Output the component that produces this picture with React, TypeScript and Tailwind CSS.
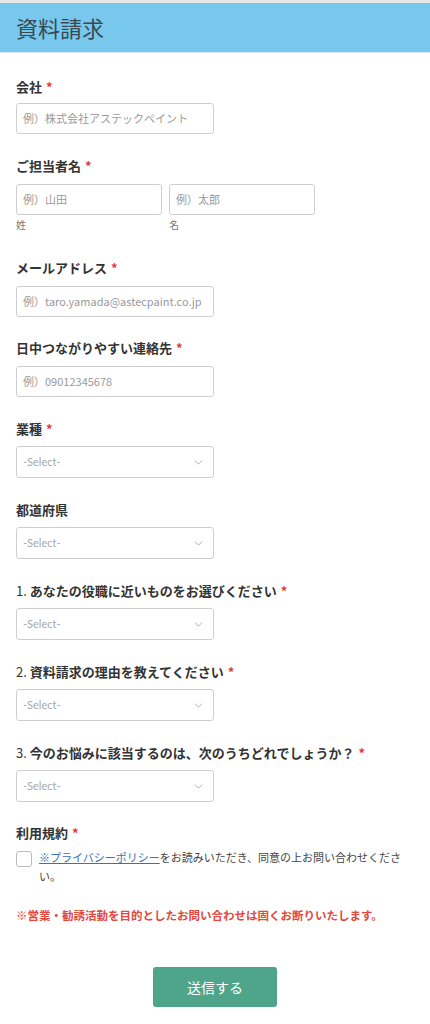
import { ChevronDown } from 'lucide-react'

const font = { fontFamily: '"Noto Sans CJK JP", "Noto Sans", sans-serif' }

function Label({ text, num, required }: { text: string; num?: string; required?: boolean }) {
    return (
        <div className="h-5 text-[13px] leading-5 font-bold text-[#333] whitespace-nowrap">
            {num && <span className="font-normal">{num} </span>}
            {text}
            {required && <span className="ml-1 text-[#e03b3b]">*</span>}
        </div>
    )
}

function TextInput({ placeholder, width = 'w-[198px]' }: { placeholder: string; width?: string }) {
    return (
        <div className={`${width} h-[31px] border border-[#cfcfcf] rounded-[3px] bg-white flex items-center px-[6px] text-[11px] text-[#9a9a9a] whitespace-nowrap overflow-hidden`}>
            {placeholder}
        </div>
    )
}

function SelectBox() {
    return (
        <div className="w-[198px] h-[32px] border border-[#cfcfcf] rounded-[3px] bg-white flex items-center justify-between pl-[6px] pr-[8px] text-[11px] text-[#a8a8a8]">
            <span style={{ fontFamily: 'Lato, "Noto Sans", sans-serif' }}>-Select-</span>
            <ChevronDown className="w-[13px] h-[13px] text-[#9a9a9a]" strokeWidth={1.5} />
        </div>
    )
}

export default function App() {
    const selects = [
        { num: '', label: '業種', required: true },
        { num: '', label: '都道府県', required: false },
        { num: '1.', label: 'あなたの役職に近いものをお選びください', required: true },
        { num: '2.', label: '資料請求の理由を教えてください', required: true },
        { num: '3.', label: '今のお悩みに該当するのは、次のうちどれでしょうか？', required: true },
    ]

    return (
        <div className="w-[430px] min-h-screen bg-white" style={font}>
            {/* Header */}
            <div className="border-t-[3px] border-[#e4e8ea] border-b border-b-[#d8e6ee]">
                <div className="h-[49px] bg-[#78c8ee] flex items-center px-4">
                    <h1 className="text-[22px] text-[#3a4853]">資料請求</h1>
                </div>
            </div>

            <div className="px-4 pt-[24px]">
                {/* 会社 */}
                <Label text="会社" required />
                <div className="mt-[6px]">
                    <TextInput placeholder="例）株式会社アステックペイント" />
                </div>

                {/* ご担当者名 */}
                <div className="mt-[22px]">
                    <Label text="ご担当者名" required />
                    <div className="mt-[8px] flex gap-[7px]">
                        <div>
                            <TextInput placeholder="例）山田" width="w-[146px]" />
                            <div className="mt-[2px] text-[10px] text-[#777]">姓</div>
                        </div>
                        <div>
                            <TextInput placeholder="例）太郎" width="w-[146px]" />
                            <div className="mt-[2px] text-[10px] text-[#777]">名</div>
                        </div>
                    </div>
                </div>

                {/* メールアドレス */}
                <div className="mt-[26px]">
                    <Label text="メールアドレス" required />
                    <div className="mt-[8px]">
                        <TextInput placeholder="例）taro.yamada@astecpaint.co.jp" />
                    </div>
                </div>

                {/* 連絡先 */}
                <div className="mt-[21px]">
                    <Label text="日中つながりやすい連絡先" required />
                    <div className="mt-[8px]">
                        <TextInput placeholder="例）09012345678" />
                    </div>
                </div>

                {/* Selects */}
                {selects.map(s => (
                    <div key={s.label} className="mt-[22px]">
                        <Label num={s.num} text={s.label} required={s.required} />
                        <div className="mt-[7px]">
                            <SelectBox />
                        </div>
                    </div>
                ))}

                {/* 利用規約 */}
                <div className="mt-[21px]">
                    <Label text="利用規約" required />
                    <div className="mt-[5px] flex items-start gap-[7px]">
                        <div className="w-[16px] h-[16px] mt-[3px] shrink-0 border border-[#bdbdbd] rounded-[3px] bg-white" />
                        <p className="text-[11px] leading-[19px] text-[#444]">
                            <span className="text-[#3c6fb4] underline">※プライバシーポリシー</span>
                            をお読みいただき、同意の上お問い合わせください。
                        </p>
                    </div>
                </div>

                {/* Notice */}
                <p className="mt-[21px] text-[11.5px] font-bold text-[#e2483d] whitespace-nowrap">
                    ※営業・勧誘活動を目的としたお問い合わせは固くお断りいたします。
                </p>

                {/* Submit */}
                <div className="mt-[43px] flex justify-center">
                    <button className="w-[124px] h-[40px] rounded-[3px] bg-[#4fa58a] text-white text-[14px]">
                        送信する
                    </button>
                </div>
            </div>
        </div>
    )
}
